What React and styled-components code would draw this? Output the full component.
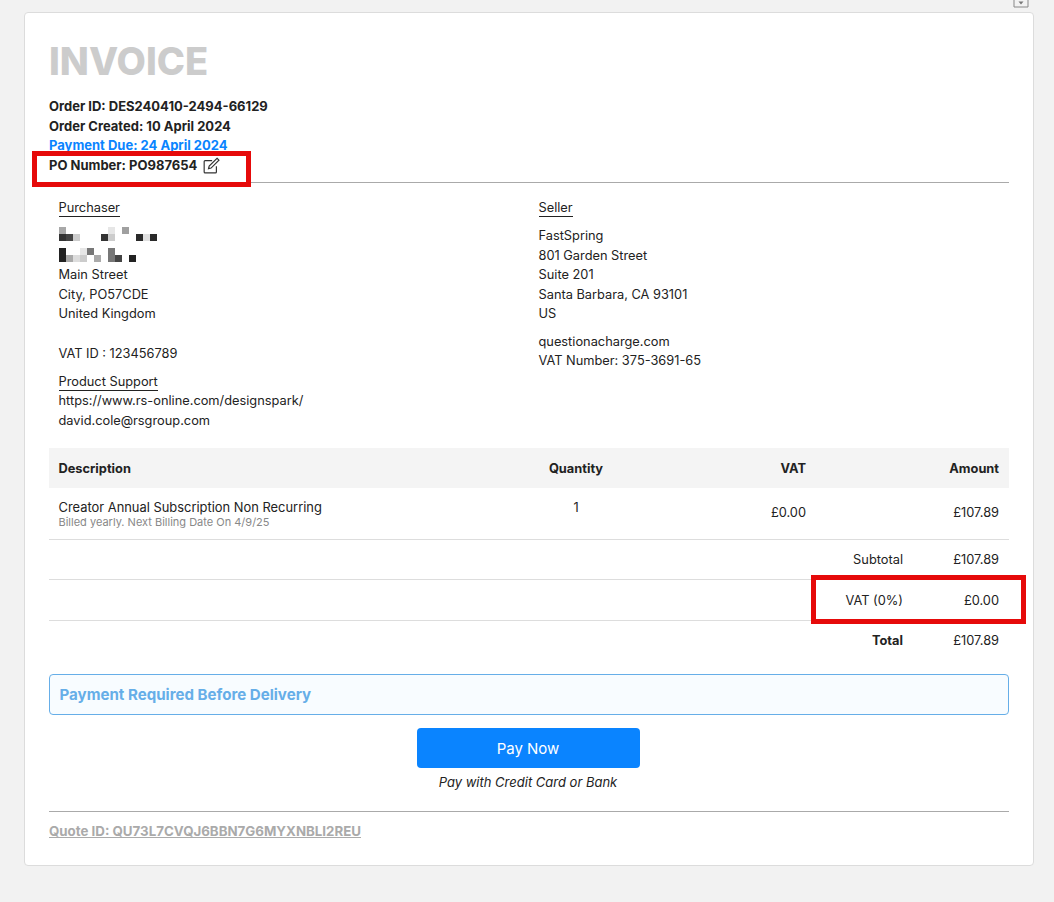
import React from "react";
import styled, { createGlobalStyle } from "styled-components";

const blocks = [
	[0, 0, 7, 7, "#a8a8a8"], [0, 7, 7, 7, "#333"], [7, 7, 7, 7, "#444"], [14, 7, 7, 7, "#ccc"],
	[42, 7, 7, 7, "#333"], [49, 7, 7, 7, "#ccc"], [49, 0, 7, 7, "#e6e6e6"], [63, 0, 7, 7, "#a0a0a0"],
	[77, 7, 7, 7, "#2a2a2a"], [84, 7, 7, 7, "#e0e0e0"], [91, 7, 7, 7, "#2a2a2a"],
	[0, 21, 7, 7, "#222"], [0, 28, 7, 7, "#222"], [7, 28, 7, 7, "#aaa"], [14, 28, 7, 7, "#ddd"],
	[21, 21, 7, 7, "#e6e6e6"], [21, 28, 7, 7, "#ccc"], [28, 21, 7, 7, "#777"], [35, 28, 7, 7, "#aaa"],
	[49, 21, 7, 7, "#777"], [49, 28, 7, 7, "#777"], [56, 28, 7, 7, "#444"], [70, 28, 7, 7, "#222"],
];

const Invoice = () => {
	return (
		<Page>
			<GlobalStyle />
			<TopStrip>
				<SaveIcon viewBox="0 0 16 8" aria-hidden="true">
					<path d="M1 0v7h14V0" fill="none" stroke="#888" strokeWidth="1" />
					<path d="M5.5 1.5h5L8 4.5z" fill="#777" />
				</SaveIcon>
			</TopStrip>
			<Card>
				<Title>INVOICE</Title>
				<Meta>
					<MetaLine>Order ID: DES240410-2494-66129</MetaLine>
					<MetaLine>Order Created: 10 April 2024</MetaLine>
					<MetaLine $due>Payment Due: 24 April 2024</MetaLine>
					<MetaLine>
						PO Number: PO987654
						<EditIcon viewBox="0 0 16 16" aria-hidden="true">
							<path d="M12.6 8.6V14a.9.9 0 0 1-.9.9H2a.9.9 0 0 1-.9-.9V4.3A.9.9 0 0 1 2 3.4h6.6" />
							<path d="M13.2 1.2l1.8 1.8-7.4 7.4-2.4.6.6-2.4z" />
						</EditIcon>
						<Highlight $po />
					</MetaLine>
				</Meta>
				<Parties>
					<Party>
						<PartyLabel>Purchaser</PartyLabel>
						<Redacted viewBox="0 0 98 35" aria-hidden="true">
							{blocks.map((b, i) => (
								<rect key={i} x={b[0]} y={b[1]} width={b[2]} height={b[3]} fill={b[4]} />
							))}
						</Redacted>
						<PartyLine>Main Street</PartyLine>
						<PartyLine>City, PO57CDE</PartyLine>
						<PartyLine>United Kingdom</PartyLine>
						<VatId>VAT ID : 123456789</VatId>
						<SupportLabel>Product Support</SupportLabel>
						<PartyLine>https://www.rs-online.com/designspark/</PartyLine>
						<PartyLine>david.cole@rsgroup.com</PartyLine>
					</Party>
					<Party>
						<SellerLabel>Seller</SellerLabel>
						<PartyLine>FastSpring</PartyLine>
						<PartyLine>801 Garden Street</PartyLine>
						<PartyLine>Suite 201</PartyLine>
						<PartyLine>Santa Barbara, CA 93101</PartyLine>
						<PartyLine>US</PartyLine>
						<SellerSite>questionacharge.com</SellerSite>
						<PartyLine>VAT Number: 375-3691-65</PartyLine>
					</Party>
				</Parties>
				<TableHead>
					<span>Description</span>
					<QtyCell>Quantity</QtyCell>
					<RightCell>VAT</RightCell>
					<RightCell>Amount</RightCell>
				</TableHead>
				<ItemRow>
					<div>
						<ItemName>Creator Annual Subscription Non Recurring</ItemName>
						<ItemNote>Billed yearly. Next Billing Date On 4/9/25</ItemNote>
					</div>
					<QtyValue>1</QtyValue>
					<PriceCell>£0.00</PriceCell>
					<PriceCell>£107.89</PriceCell>
				</ItemRow>
				<SumRow>
					<SumLabel>Subtotal</SumLabel>
					<SumValue>£107.89</SumValue>
				</SumRow>
				<SumRow $tall>
					<SumLabel>VAT (0%)</SumLabel>
					<SumValue>£0.00</SumValue>
					<Highlight />
				</SumRow>
				<SumRow $last>
					<SumLabel $bold>Total</SumLabel>
					<SumValue>£107.89</SumValue>
				</SumRow>
				<Notice>Payment Required Before Delivery</Notice>
				<PayArea>
					<PayButton type="button">Pay Now</PayButton>
					<PayNote>Pay with Credit Card or Bank</PayNote>
				</PayArea>
				<Footer>
					<QuoteLink>Quote ID: QU73L7CVQJ6BBN7G6MYXNBLI2REU</QuoteLink>
				</Footer>
			</Card>
		</Page>
	);
};

const GlobalStyle = createGlobalStyle`
	* {
		box-sizing: border-box;
	}

	body {
		margin: 0;
		background-color: #f2f2f2;
		font-family: "Inter", "Liberation Sans", sans-serif;
		color: #222;
	}
`;

const Page = styled.div`
	width: 1054px;
	height: 902px;
	padding: 0 20px 0 24px;
	overflow: hidden;
`;

const TopStrip = styled.div`
	height: 12px;
	display: flex;
	justify-content: flex-end;
	padding-right: 5px;
`;

const SaveIcon = styled.svg`
	width: 16px;
	height: 8px;
`;

const Card = styled.main`
	width: 1010px;
	height: 854px;
	padding: 25px 24px 0;
	background-color: #fff;
	border: 1px solid #dcdcdc;
	border-radius: 4px;
`;

const Title = styled.h1`
	margin: 0;
	font-size: 38px;
	line-height: 46px;
	font-weight: 800;
	color: #ccc;
`;

const Meta = styled.div`
	margin-top: 13px;
	padding-bottom: 7px;
	border-bottom: 1px solid #aaa;
`;

const MetaLine = styled.div`
	position: relative;
	height: 19.5px;
	font-size: 13px;
	line-height: 19.5px;
	font-weight: 700;
	color: ${({ $due }) => ($due ? "#0a84ff" : "#222")};
	display: flex;
	align-items: center;
`;

const EditIcon = styled.svg`
	width: 17px;
	height: 17px;
	margin-left: 6px;
	fill: none;
	stroke: #333;
	stroke-width: 1.1;
`;

const Highlight = styled.span`
	position: absolute;
	border: 5px solid #e60a0a;
	pointer-events: none;
	${({ $po }) =>
		$po
			? `
		left: -17px;
		top: -5px;
		width: 219px;
		height: 36px;
	`
			: `
		left: 762px;
		top: -5px;
		width: 215px;
		height: 49px;
	`}
`;

const Parties = styled.section`
	display: grid;
	grid-template-columns: 480px 1fr;
	padding: 17px 9.5px 0;
`;

const Party = styled.div`
	display: flex;
	flex-direction: column;
	align-items: flex-start;
`;

const PartyLabel = styled.div`
	font-size: 12.8px;
	line-height: 16px;
	color: #222;
	border-bottom: 1px solid #222;
	margin-bottom: 10px;
`;

const SellerLabel = styled(PartyLabel)`
	margin-bottom: 9px;
`;

const SupportLabel = styled(PartyLabel)`
	margin-top: 11px;
	margin-bottom: 0;
`;

const Redacted = styled.svg`
	width: 98px;
	height: 35px;
	margin-bottom: 3px;
`;

const PartyLine = styled.div`
	font-size: 12.8px;
	line-height: 19.5px;
	color: #222;
`;

const VatId = styled(PartyLine)`
	margin-top: 20px;
`;

const SellerSite = styled(PartyLine)`
	margin-top: 8px;
`;

const tableColumns = "1fr 120px 170px 193px";

const TableHead = styled.div`
	display: grid;
	grid-template-columns: ${tableColumns};
	align-items: center;
	height: 40px;
	margin-top: 18px;
	padding: 0 10px 0 9.5px;
	background-color: #f4f4f4;
	font-size: 12.8px;
	font-weight: 700;
`;

const QtyCell = styled.span`
	text-align: center;
`;

const RightCell = styled.span`
	text-align: right;
`;

const ItemRow = styled.div`
	display: grid;
	grid-template-columns: ${tableColumns};
	height: 52px;
	padding: 11px 10px 0 9.5px;
	border-bottom: 1px solid #ddd;
	font-size: 12.8px;
`;

const ItemName = styled.div`
	font-size: 12.9px;
	line-height: 17px;
`;

const ItemNote = styled.div`
	font-size: 11px;
	line-height: 13px;
	color: #888;
`;

const QtyValue = styled.div`
	text-align: center;
	line-height: 17px;
`;

const PriceCell = styled.div`
	text-align: right;
	line-height: 27px;
`;

const SumRow = styled.div`
	position: relative;
	display: flex;
	justify-content: flex-end;
	align-items: center;
	height: ${({ $tall }) => ($tall ? "41px" : "40px")};
	padding-right: 10px;
	padding-bottom: ${({ $last }) => ($last ? "2px" : "0")};
	border-bottom: ${({ $last }) => ($last ? "none" : "1px solid #ddd")};
	font-size: 12.8px;
`;

const SumLabel = styled.span`
	font-weight: ${({ $bold }) => ($bold ? 700 : 400)};
`;

const SumValue = styled.span`
	width: 96px;
	text-align: right;
`;

const Notice = styled.div`
	height: 41px;
	margin-top: 13px;
	padding-left: 9.5px;
	display: flex;
	align-items: center;
	background-color: #f8fcff;
	border: 1px solid #66aee8;
	border-radius: 4px;
	color: #66aee8;
	font-size: 15.1px;
	font-weight: 700;
`;

const PayArea = styled.div`
	margin-top: 13px;
	padding-right: 2px;
	display: flex;
	flex-direction: column;
	align-items: center;
`;

const PayButton = styled.button`
	width: 223px;
	height: 40px;
	border: none;
	border-radius: 4px;
	background-color: #0a84ff;
	color: #fff;
	font-family: inherit;
	font-size: 15px;
`;

const PayNote = styled.div`
	margin-top: 6px;
	font-size: 13px;
	line-height: 17px;
	font-style: italic;
`;

const Footer = styled.div`
	margin-top: 20px;
	padding-top: 8px;
	border-top: 1px solid #aaa;
`;

const QuoteLink = styled.span`
	font-size: 13.3px;
	font-weight: 700;
	color: #aaa;
	text-decoration: underline;
`;

export default Invoice;
